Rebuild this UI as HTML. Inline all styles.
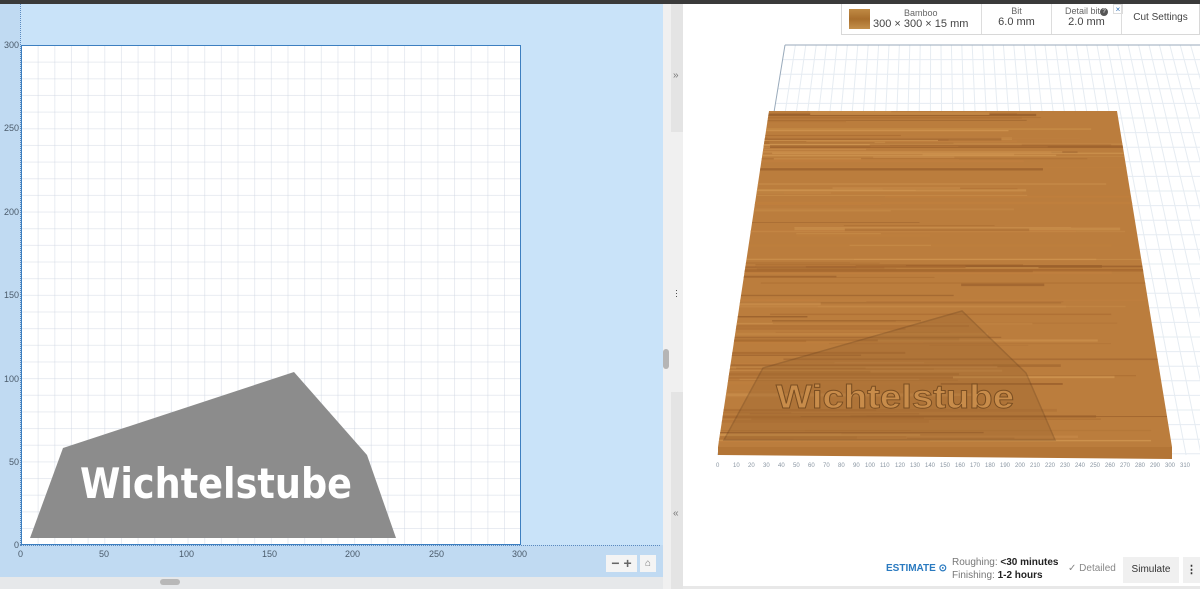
<!DOCTYPE html>
<html><head><meta charset="utf-8"><style>
*{margin:0;padding:0;box-sizing:border-box}
body{width:1200px;height:589px;overflow:hidden;background:#fff;font-family:"Liberation Sans",sans-serif;position:relative}
.abs{position:absolute}
.lbl{position:absolute;font-size:9px;color:#4a5a6a}
.yl{position:absolute;left:0;width:19px;text-align:right;font-size:9px;color:#4a5a6a}
</style></head><body>
<div class="abs" style="left:0;top:0;width:1200px;height:4px;background:#3a3a3a"></div>
<div class="abs" style="left:0;top:4px;width:663px;height:573px;background:#c9e3f9"></div>
<div class="abs" style="left:0;top:4px;width:20px;height:573px;background:#c0daf2"></div>
<div class="abs" style="left:0;top:545px;width:663px;height:32px;background:#c0daf2"></div>
<div class="abs" style="left:0;top:577px;width:663px;height:12px;background:#e6e8ea"></div>
<div class="abs" style="left:160px;top:579px;width:20px;height:6px;border-radius:3px;background:#b8b8b8"></div>
<div class="abs" style="left:20px;top:4px;width:0;height:541px;border-left:1px dotted #5a8ac0"></div>
<div class="abs" style="left:20px;top:545px;width:640px;height:0;border-top:1px dotted #5a8ac0"></div>
<div class="abs" style="left:21px;top:45px;width:500px;height:500px;background-color:#fff;border:1px solid #3d7fc0;
background-image:linear-gradient(to right,rgba(205,212,225,.45) 1px,transparent 1px),linear-gradient(to bottom,rgba(205,212,225,.45) 1px,transparent 1px);background-size:16.67px 16.67px;background-position:-1px -1px"></div>
<div class="yl" style="top:40px">300</div>
<div class="yl" style="top:123px">250</div>
<div class="yl" style="top:207px">200</div>
<div class="yl" style="top:290px">150</div>
<div class="yl" style="top:374px">100</div>
<div class="yl" style="top:457px">50</div>
<div class="yl" style="top:540px">0</div>
<div class="lbl" style="left:18px;top:549px">0</div>
<div class="lbl" style="left:99px;top:549px">50</div>
<div class="lbl" style="left:179px;top:549px">100</div>
<div class="lbl" style="left:262px;top:549px">150</div>
<div class="lbl" style="left:345px;top:549px">200</div>
<div class="lbl" style="left:429px;top:549px">250</div>
<div class="lbl" style="left:512px;top:549px">300</div>
<svg class="abs" style="left:0;top:0" width="663" height="589">
<polygon points="30,538 63,448 294,372 367,455 396,538" fill="#8c8c8c"/>
<text x="80" y="498" font-family="DejaVu Sans" font-weight="bold" font-size="42" fill="#fff" textLength="272" lengthAdjust="spacingAndGlyphs">Wichtelstube</text>
</svg>
<div class="abs" style="left:606px;top:555px;width:31px;height:17px;background:#f4f4f4;font-size:14px;font-weight:bold;color:#666;line-height:17px;text-align:center">− +</div>
<div class="abs" style="left:640px;top:555px;width:16px;height:17px;background:#f4f4f4;font-size:10px;color:#777;line-height:17px;text-align:center">⌂</div>
<div class="abs" style="left:663px;top:4px;width:20px;height:585px;background:#f0f0f0"></div>
<div class="abs" style="left:671px;top:4px;width:12px;height:128px;background:#e4e4e4"></div>
<div class="abs" style="left:671px;top:392px;width:12px;height:197px;background:#e4e4e4"></div>
<div class="abs" style="left:663px;top:349px;width:6px;height:20px;border-radius:3px;background:#b5b5b5"></div>
<div class="abs" style="left:673px;top:70px;font-size:10px;color:#777">»</div>
<div class="abs" style="left:675px;top:289px;font-size:9px;color:#333;line-height:3px">·<br>·<br>·</div>
<div class="abs" style="left:673px;top:508px;font-size:10px;color:#777">«</div>
<svg class="abs" style="left:683px;top:0" width="517" height="589">
<g stroke="#e6ecf2" stroke-width="1" id="gridl"></g>
<line x1="102" y1="45" x2="517" y2="45" stroke="#9ab" stroke-width="1"/>
<line x1="102" y1="45" x2="35" y2="455" stroke="#9ab" stroke-width="1"/>
<clipPath id="bc"><polygon points="86,111 434,111 489,447 35,447"/></clipPath>
<polygon points="86,111 434,111 489,447 35,447" fill="#bb7d3d"/>
<g id="stripes" clip-path="url(#bc)"></g>
<polygon points="35,447 489,447 489,459 35,455" fill="#b37536"/>
<polygon points="41,440 80,368 279,311 343,373 372,440" fill="#9a6530" opacity=".35" stroke="#6b4320" stroke-width="1.5"/>
<text x="93" y="408" font-family="Liberation Sans" font-weight="bold" font-size="33" fill="#c88c4a" stroke="#7a4e22" stroke-width=".9" textLength="238" lengthAdjust="spacingAndGlyphs">Wichtelstube</text>
<g font-size="6" fill="#8a96a2">
<text x="33" y="467">0</text><text x="50" y="467">10</text><text x="65" y="467">20</text><text x="80" y="467">30</text><text x="95" y="467">40</text><text x="110" y="467">50</text><text x="125" y="467">60</text><text x="140" y="467">70</text><text x="155" y="467">80</text><text x="170" y="467">90</text><text x="182" y="467">100</text><text x="197" y="467">110</text><text x="212" y="467">120</text><text x="227" y="467">130</text><text x="242" y="467">140</text><text x="257" y="467">150</text><text x="272" y="467">160</text><text x="287" y="467">170</text><text x="302" y="467">180</text><text x="317" y="467">190</text><text x="332" y="467">200</text><text x="347" y="467">210</text><text x="362" y="467">220</text><text x="377" y="467">230</text><text x="392" y="467">240</text><text x="407" y="467">250</text><text x="422" y="467">260</text><text x="437" y="467">270</text><text x="452" y="467">280</text><text x="467" y="467">290</text><text x="482" y="467">300</text><text x="497" y="467">310</text>
</g>
</svg>
<script>
(function(){var s=document.querySelector('#gridl'),ns='http://www.w3.org/2000/svg';
for(var i=0;i<=28;i++){var y=45+i*14.6;var x=102-(y-45)*67/410;var l=document.createElementNS(ns,'line');l.setAttribute('x1',x);l.setAttribute('y1',y);l.setAttribute('x2',517);l.setAttribute('y2',y);s.appendChild(l);}
for(var j=1;j<=40;j++){var xt=102+j*10.4,xb=35+j*15.1;var l2=document.createElementNS(ns,'line');l2.setAttribute('x1',xt);l2.setAttribute('y1',45);l2.setAttribute('x2',xb);l2.setAttribute('y2',455);s.appendChild(l2);}
var g=document.querySelector('#stripes'),seed=7;function r(){seed=(seed*9301+49297)%233280;return seed/233280;}
var cols=['#a86a30','#c68a48','#9a602c','#cf9550','#b07236','#c07f3e'];
for(var k=0;k<160;k++){var y=111+r()*336,h=0.6+r()*2.2,x=30+r()*300,w=80+r()*400;var rc=document.createElementNS(ns,'rect');rc.setAttribute('x',x-w/2);rc.setAttribute('y',y);rc.setAttribute('width',w);rc.setAttribute('height',h);rc.setAttribute('fill',cols[Math.floor(r()*cols.length)]);rc.setAttribute('opacity',0.5+r()*0.4);g.appendChild(rc);}
})();
</script>
<div class="abs" style="left:841px;top:4px;width:359px;height:31px;background:#fff;border:1px solid #d8d8d8;border-top:none;display:flex;color:#444;white-space:nowrap">
<div style="width:140px;display:flex;align-items:center;border-right:1px solid #ddd"><div style="width:21px;height:20px;margin:0 3px 0 7px;flex:none;background:linear-gradient(#c08a44,#a86e2c,#c4904c)"></div><div style="text-align:center"><div style="font-size:9px;color:#666">Bamboo</div><div style="font-size:11px">300 × 300 × 15 mm</div></div></div>
<div style="width:70px;text-align:center;border-right:1px solid #ddd;padding-top:2px"><div style="font-size:9px;color:#666">Bit</div><div style="font-size:11px">6.0 mm</div></div>
<div style="width:70px;text-align:center;border-right:1px solid #ddd;padding-top:2px;position:relative"><div style="font-size:9px;color:#666">Detail bit<span style="display:inline-block;width:8px;height:8px;border-radius:50%;background:#555;color:#fff;font-size:6px;line-height:8px;vertical-align:middle">?</span></div><div style="font-size:11px">2.0 mm</div><div style="position:absolute;right:-2px;top:0;width:10px;height:10px;font-size:8px;color:#2a6ab0;line-height:10px;border:1px solid #ddd;text-align:center">×</div></div>
<div style="flex:1;text-align:center;font-size:10px;line-height:28px">Cut Settings</div>
</div>
<div class="abs" style="left:886px;top:563px;font-size:10px;font-weight:bold;color:#2a7ac0">ESTIMATE ⊙</div>
<div class="abs" style="left:952px;top:556px;font-size:10px;color:#777;line-height:13px">Roughing: <b style="color:#222">&lt;30 minutes</b><br>Finishing: <b style="color:#222">1-2 hours</b></div>
<div class="abs" style="left:1068px;top:563px;font-size:10px;color:#888">✓ Detailed</div>
<div class="abs" style="left:1123px;top:557px;width:56px;height:26px;background:#f0f0f0;font-size:10px;color:#333;text-align:center;line-height:26px">Simulate</div>
<div class="abs" style="left:1183px;top:557px;width:17px;height:26px;background:#f0f0f0;font-size:11px;font-weight:bold;color:#333;text-align:center;line-height:26px">⋮</div>
<div class="abs" style="left:683px;top:586px;width:517px;height:3px;background:#e8e8e8"></div>
</body></html>
